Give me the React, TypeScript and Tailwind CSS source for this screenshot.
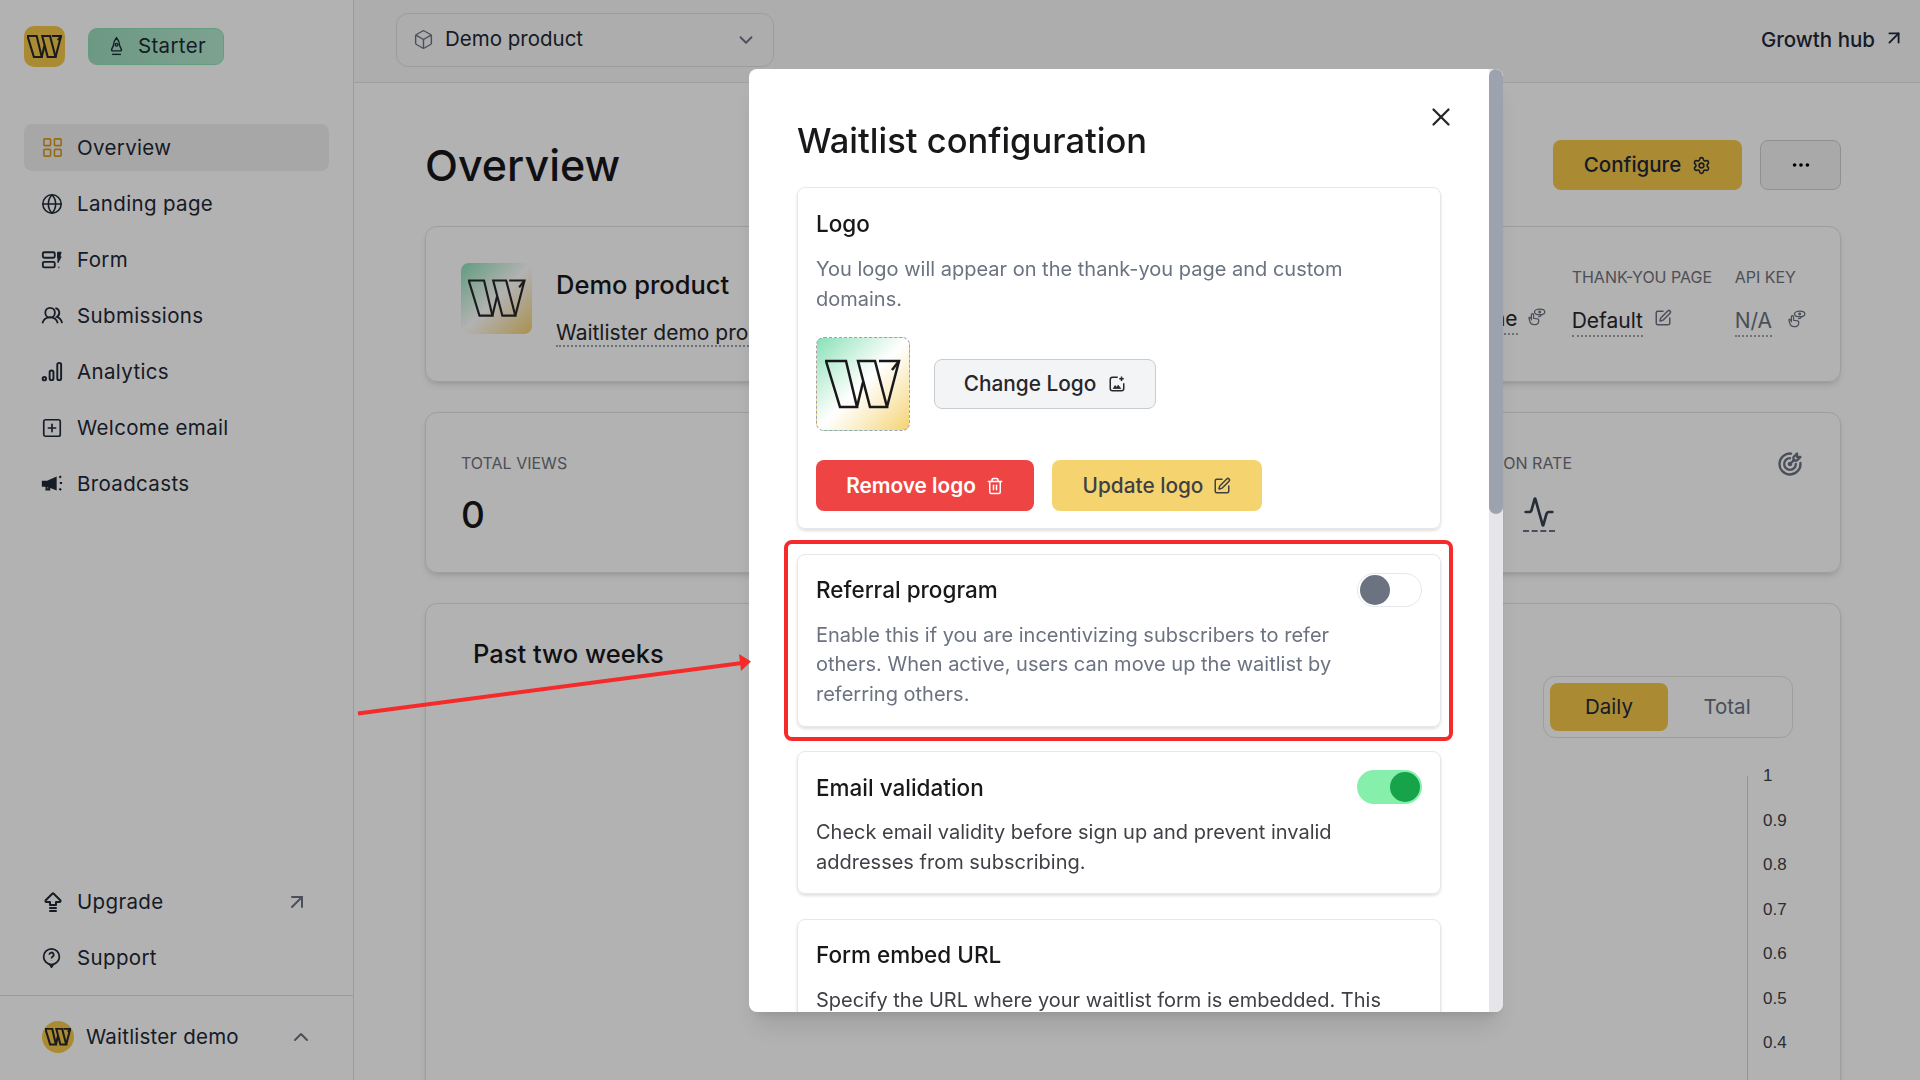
import { ReactNode } from "react";
import {
  Activity,
  ArrowUpRight,
  Box,
  ChevronDown,
  ChevronUp,
  Ellipsis,
  Globe,
  LayoutGrid,
  Settings,
  SquarePen,
  SquarePlus,
  Trash2,
  X,
} from "lucide-react";
import { TbArrowBigUpLines, TbTargetArrow } from "react-icons/tb";

const font = { fontFamily: "Inter, 'Noto Sans', sans-serif" };

const WMark = ({ className = "", sw = 2.500 }: { className?: string; sw?: number }) => (
  <svg viewBox="-1 -1 76 50" className={className} fill="none" stroke="currentColor" strokeWidth={sw} strokeLinejoin="miter">
    <path d="M0 1 H20 L31 47 H14 Z" />
    <path d="M32 1 H49 L61 47 H44 Z" />
    <path d="M31 47 L37 22" />
    <path d="M53 1 H73 L61 47" />
    <path d="M66 10 L73 1" />
  </svg>
);

const RocketUp = () => (
  <svg viewBox="0 0 24 24" className="w-[21px] h-[21px]" fill="none" stroke="currentColor" strokeWidth={1.600}>
    <path d="M12 2c2.600 3 3.600 6 3.600 9l2 4.500c.3 1-.4 1.500-1.200 1.500H7.600c-.8 0-1.500-.5-1.200-1.500l2-4.500c0-3 1-6 3.600-9Z" />
    <circle cx="12" cy="10" r="1.600" />
    <path d="M7 21h10" />
  </svg>
);

const FormIcon = () => (
  <svg viewBox="0 0 24 24" className="w-[22px] h-[22px]" fill="none" stroke="currentColor" strokeWidth={2}>
    <rect x="2" y="3.500" width="13" height="6" rx="1.500" />
    <rect x="2" y="14" width="13" height="6" rx="1.500" />
    <path d="M18 3.500h4l-1.500 5H22l-3.500 6.500V9.500H18Z" fill="currentColor" strokeWidth={1} />
    <path d="M19 20h1" />
  </svg>
);

const UsersIcon = () => (
  <svg viewBox="0 0 24 24" className="w-[23px] h-[23px]" fill="none" stroke="currentColor" strokeWidth={1.900}>
    <circle cx="9.500" cy="9" r="5" />
    <path d="M1.500 20c1-3.500 3.500-6 8-6s7 2.500 8 6" />
    <path d="M15 4.200a5 5 0 0 1 1.500 9.300c2.800.8 4.800 3 5.500 6.500" />
  </svg>
);

const BarsIcon = () => (
  <svg viewBox="0 0 24 24" className="w-[23px] h-[23px]" fill="none" stroke="currentColor" strokeWidth={2}>
    <circle cx="3.500" cy="19.500" r="1.800" />
    <rect x="9" y="11" width="4" height="10" rx="2" />
    <rect x="17" y="3" width="4" height="18" rx="2" />
  </svg>
);

const MegaIcon = () => (
  <svg viewBox="0 0 24 24" className="w-[22px] h-[22px]" fill="none" stroke="currentColor" strokeWidth={2.200}>
    <path d="M2 9.500h5l9-4v12l-9-3.500H2Z" fill="currentColor" />
    <path d="M6 14v4h3v-3" />
    <path d="M20 5l2-1.500M20.500 11H23M20 17l2 1.500" />
  </svg>
);

const SupportIcon = () => (
  <svg viewBox="0 0 24 24" className="w-[21px] h-[21px]" fill="none" stroke="currentColor" strokeWidth={2}>
    <circle cx="12" cy="11" r="9" />
    <path d="M9.500 8.800a2.500 2.500 0 1 1 3.700 2.200c-.8.500-1.200 1-1.200 2" />
    <path d="M12 15.800v.2" />
    <path d="M10 20l2 3 2-3" />
  </svg>
);

const HandEye = () => (
  <svg viewBox="0 0 24 24" className="w-[19px] h-[19px] mt-[3px] text-[#6b7280]" fill="none" stroke="currentColor" strokeWidth={1.600}>
    <path d="M9 21c-3 0-5-2-5.500-4.500L2.500 13c-.3-1 1.200-1.600 1.800-.6L5.500 14V8.500a1.400 1.400 0 0 1 2.800 0V13l5 .8c1 .2 1.700 1 1.600 2-.2 2.800-1.400 5.200-4.400 5.200Z" />
    <ellipse cx="16" cy="5" rx="6.500" ry="3.500" />
    <circle cx="16" cy="5" r="1" fill="currentColor" />
    <path d="M14 11c2 0 4-1 5-3" />
  </svg>
);

const ImageAdd = () => (
  <svg viewBox="0 0 24 24" className="w-[18px] h-[18px]" fill="none" stroke="currentColor" strokeWidth={2}>
    <path d="M13 3H6a3 3 0 0 0-3 3v12a3 3 0 0 0 3 3h12a3 3 0 0 0 3-3v-7" />
    <path d="M7 18l2.500-4 2 2.500 2-3 3.500 4.500Z" fill="currentColor" strokeWidth={1} />
    <path d="M18 2v6M15 5h6" />
  </svg>
);

const navItems: { label: string; icon: ReactNode; active?: boolean }[] = [
  { label: "Overview", icon: <LayoutGrid size={23} strokeWidth={1.700} className="text-[#d99a1c]" />, active: true },
  { label: "Landing page", icon: <Globe size={22} strokeWidth={1.700} /> },
  { label: "Form", icon: <FormIcon /> },
  { label: "Submissions", icon: <UsersIcon /> },
  { label: "Analytics", icon: <BarsIcon /> },
  { label: "Welcome email", icon: <SquarePlus size={22} strokeWidth={1.800} /> },
  { label: "Broadcasts", icon: <MegaIcon /> },
];

const NavRow = ({ label, icon, active, trailing }: { label: string; icon: ReactNode; active?: boolean; trailing?: ReactNode }) => (
  <div className={`flex items-center h-[47px] pl-[17px] pr-[20px] rounded-lg text-[#1f2937] ${active ? "bg-[#f0f0f0]" : ""}`}>
    <span className="w-[36px] flex shrink-0">{icon}</span>
    <span className="text-[20.500px] tracking-[0.35px] pt-[1px]">{label}</span>
    {trailing && <span className="ml-auto">{trailing}</span>}
  </div>
);

const Sidebar = () => (
  <aside className="w-[354px] h-[1080px] shrink-0 border-r border-[#e0e0e0] bg-white flex flex-col">
    <div className="flex items-center pl-[24px] pt-[26px] gap-[23px]">
      <div className="w-[41px] h-[41px] rounded-[10px] bg-[#f4c84a] text-[#27272a] flex items-center justify-center">
        <WMark className="w-[35px]" sw={4.500} />
      </div>
      <div className="w-[136px] h-[37px] rounded-[9px] border border-[#8fe0b8] bg-gradient-to-r from-[#9bdcbc] to-[#b4e8cf] flex items-center justify-center gap-[11px] text-[#1f2937]">
        <RocketUp />
        <span className="text-[20.500px] tracking-[0.35px]">Starter</span>
      </div>
    </div>
    <nav className="mt-[57px] mx-[24px] flex flex-col gap-[9px]">
      {navItems.map((item) => (
        <NavRow key={item.label} {...item} />
      ))}
    </nav>
    <div className="mt-auto mx-[24px] flex flex-col gap-[9px] mb-[14px]">
      <NavRow
        label="Upgrade"
        icon={<TbArrowBigUpLines size={24} />}
        trailing={<ArrowUpRight size={24} className="text-[#6b7280]" />}
      />
      <NavRow label="Support" icon={<SupportIcon />} />
    </div>
    <div className="h-[85px] pb-[2px] border-t border-[#e0e0e0] flex items-center pl-[42px] pr-[40px] text-[#1f2937]">
      <div className="w-[32px] h-[32px] rounded-full bg-[#f4c84a] flex items-center justify-center text-[#27272a]">
        <WMark className="w-[26px]" sw={6} />
      </div>
      <span className="ml-[12px] text-[20.500px] tracking-[0.2px]">Waitlister demo</span>
      <ChevronUp size={24} className="ml-auto text-[#6b7280]" />
    </div>
  </aside>
);

const Label = ({ children }: { children: ReactNode }) => (
  <div className="text-[16px] text-[#71717a] uppercase whitespace-nowrap">{children}</div>
);

const Dotted = ({ children, muted }: { children: ReactNode; muted?: boolean }) => (
  <span className={`border-b-2 border-dotted border-[#9ca3af] text-[21px] leading-[28px] whitespace-nowrap ${muted ? "text-[#6b7280]" : "text-[#27272a]"}`}>{children}</span>
);

const axis = ["1", "0.9", "0.8", "0.7", "0.6", "0.5", "0.4", "0.3"];

const Main = () => (
  <div className="flex-1 h-[1080px] overflow-hidden bg-white">
    <header className="h-[83px] border-b border-[#e4e4e4] bg-[#f8f8f8] flex items-center pl-[42px] pr-[15px]">
      <div className="w-[378px] h-[54px] mb-[3px] rounded-xl border border-[#e0e0e0] flex items-center pl-[16px] pr-[16px] text-[#1f2937]">
        <Box size={21} strokeWidth={1.600} className="text-[#6b7280]" />
        <span className="ml-[11px] text-[20.500px]">Demo product</span>
        <ChevronDown size={22} className="ml-auto text-[#6b7280]" />
      </div>
      <div className="ml-auto mb-[2px] flex items-center gap-[8px] text-[#1f2937]">
        <span className="text-[20.500px] font-medium">Growth hub</span>
        <ArrowUpRight size={22} className="-translate-y-[2px]" />
      </div>
    </header>
    <div className="pl-[71px] pr-[79px]">
      <div className="h-[143px] pt-[21px] flex items-center justify-between">
        <h1 className="text-[43px] font-medium text-[#18181b]">Overview</h1>
        <div className="flex gap-[18px]">
          <div className="w-[189px] h-[50px] rounded-lg bg-[#f4c84a] flex items-center justify-center gap-[11px] text-[#1f2937]">
            <span className="text-[20.500px] font-medium">Configure</span>
            <Settings size={19} />
          </div>
          <div className="w-[81px] h-[50px] rounded-lg border border-[#cfcfcf] bg-[#f3f3f3] flex items-center justify-center">
            <Ellipsis size={22} />
          </div>
        </div>
      </div>

      <section className="h-[156px] rounded-xl border border-[#e2e2e2] shadow-md flex pl-[35px] relative">
        <div className="w-[71px] h-[71px] mt-[36px] rounded-lg bg-gradient-to-br from-[#86e0b8] via-white to-[#f5cf6b] text-[#27272a] flex items-center justify-center">
          <WMark className="w-[58px]" sw={2.800} />
        </div>
        <div className="ml-[24px] pt-[39px]">
          <div className="text-[25.500px] font-medium text-[#18181b]">Demo product</div>
          <div className="mt-[15px]">
            <Dotted>Waitlister demo product</Dotted>
          </div>
        </div>
        <div className="ml-auto flex pt-[38px] pr-[34px]">
          <div className="mt-[40px] flex items-start gap-[9px] mr-[26px]">
            <Dotted>None</Dotted>
            <HandEye />
          </div>
          <div className="w-[163px]">
            <Label>Thank-you page</Label>
            <div className="mt-[18px] flex items-start gap-[11px]">
              <Dotted>Default</Dotted>
              <SquarePen size={18} className="mt-[2px] text-[#6b7280]" />
            </div>
          </div>
          <div>
            <Label>API key</Label>
            <div className="mt-[18px] flex items-start gap-[15px]">
              <Dotted muted>N/A</Dotted>
              <HandEye />
            </div>
          </div>
        </div>
      </section>

      <section className="mt-[30px] h-[161px] rounded-xl border border-[#e2e2e2] shadow-md flex justify-between pl-[35px] pr-[36px] pt-[38px]">
        <div>
          <Label>Total views</Label>
          <div className="mt-[18px] text-[37px] font-medium text-[#18181b] leading-[44px]">0</div>
        </div>
        <div className="flex gap-[204px]">
          <div>
            <Label>Conversion rate</Label>
            <div className="mt-[19px] flex items-center gap-[41px]">
              <span className="text-[37px] font-medium text-[#18181b] leading-[40px]">0%</span>
              <span className="border-b-2 border-dashed border-[#6b7280] pb-[2px]">
                <Activity size={32} className="text-[#374151]" />
              </span>
            </div>
          </div>
          <TbTargetArrow size={28} className="-mt-[1px] text-[#6b7280]" />
        </div>
      </section>

      <section className="mt-[30px] h-[600px] rounded-xl border border-[#e2e2e2] shadow-md flex justify-between pl-[47px] pr-[47px] pt-[31px]">
        <h2 className="text-[25.500px] font-medium text-[#18181b] h-fit">Past two weeks</h2>
        <div className="flex flex-col items-end">
          <div className="mt-[41px] w-[250px] h-[62px] p-[6px] rounded-xl border border-[#e2e2e2] flex">
            <div className="w-[118px] rounded-lg bg-[#f4c84a] text-[#1f2937] text-[20.500px] flex items-center justify-center">Daily</div>
            <div className="flex-1 text-[#6b7280] text-[20.500px] flex items-center justify-center">Total</div>
          </div>
          <div className="mt-[38px] w-[46px] border-l border-[#d1d5db] h-[400px] flex flex-col gap-[22.500px] pl-[15px]">
            {axis.map((v) => (
              <span key={v} className="text-[17px] leading-[22px] text-[#3f3f46] -translate-y-[11px]" style={{ fontFamily: "'Liberation Sans', sans-serif" }}>
                {v}
              </span>
            ))}
          </div>
        </div>
      </section>
    </div>
  </div>
);

const ConfigCard = ({ title, toggle, dark, children, className = "" }: { title: string; toggle?: "on" | "off"; dark?: boolean; children: ReactNode; className?: string }) => (
  <div className={`rounded-lg border border-[#e5e7eb] shadow-[0_2px_3px_rgba(0,0,0,0.12)] pl-[18px] pr-[18px] pt-[18px] ${className}`}>
    <div className="flex items-center justify-between h-[34px]">
      <h3 className="text-[22.500px] font-medium text-[#18181b] pt-[1px]">{title}</h3>
      {toggle === "off" && (
        <div className="w-[65px] h-[34px] rounded-full border border-[#e5e7eb] flex items-center pl-[2px]">
          <div className="w-[30px] h-[30px] rounded-full bg-[#6b7280]" />
        </div>
      )}
      {toggle === "on" && (
        <div className="w-[65px] h-[34px] rounded-full bg-[#86efac] flex items-center justify-end pr-[2px]">
          <div className="w-[30px] h-[30px] rounded-full bg-[#16a34a]" />
        </div>
      )}
    </div>
    <p className={`mt-[14px] w-[570px] text-[20px] leading-[29.500px] ${dark ? "text-[#3f3f46]" : "text-[#6b7280]"}`}>{children}</p>
  </div>
);

const Modal = () => (
  <div className="fixed left-[749px] top-[69px] w-[754px] h-[943px] rounded-lg overflow-hidden bg-white shadow-xl" style={font}>
    <div className="absolute right-0 top-0 bottom-0 w-[14px] bg-[#e5e5ea]">
      <div className="h-[445px] rounded-full bg-[#9ca3af]" />
    </div>
    <X size={30} strokeWidth={1.800} className="absolute left-[677px] top-[33px] text-[#27272a]" />
    <div className="pl-[48px] pr-[62px] pt-[50px]">
      <h2 className="text-[34.500px] font-medium text-[#18181b] leading-[44px]">Waitlist configuration</h2>
      <div className="mt-[24px] flex flex-col gap-[24.500px]">
        <div className="h-[342px] rounded-lg border border-[#e5e7eb] shadow-[0_2px_3px_rgba(0,0,0,0.12)] px-[18px] pt-[20px]">
          <h3 className="text-[22.500px] font-medium text-[#18181b] leading-[32px]">Logo</h3>
          <p className="mt-[15px] text-[20px] leading-[29.500px] text-[#6b7280] w-[570px]">You logo will appear on the thank-you page and custom domains.</p>
          <div className="mt-[23px] flex items-center gap-[24px]">
            <div className="w-[94px] h-[94px] rounded-lg border border-dashed border-[#a1a1aa] bg-gradient-to-br from-[#86e0b8] via-white to-[#f5d36f] text-[#18181b] flex items-center justify-center">
              <WMark className="w-[76px]" sw={2.500} />
            </div>
            <div className="w-[222px] h-[50px] rounded-lg border border-[#c9cbd0] bg-[#f3f4f6] flex items-center justify-center gap-[12px] text-[#27272a]">
              <span className="text-[20.800px] font-medium">Change Logo</span>
              <ImageAdd />
            </div>
          </div>
          <div className="mt-[29px] flex gap-[18px]">
            <div className="w-[218px] h-[51px] rounded-lg bg-[#ef4444] text-white flex items-center justify-center gap-[10px]">
              <span className="text-[20.800px] font-semibold">Remove logo</span>
              <Trash2 size={18} />
            </div>
            <div className="w-[210px] h-[51px] rounded-lg bg-[#f5d470] text-[#3f3f46] flex items-center justify-center gap-[10px]">
              <span className="text-[20.800px] font-medium">Update logo</span>
              <SquarePen size={18} />
            </div>
          </div>
        </div>
        <ConfigCard title="Referral program" toggle="off" className="h-[173px]">
          Enable this if you are incentivizing subscribers to refer others. When active, users can move up the waitlist by referring others.
        </ConfigCard>
        <ConfigCard title="Email validation" toggle="on" dark className="h-[143px]">
          Check email validity before sign up and prevent invalid addresses from subscribing.
        </ConfigCard>
        <ConfigCard title="Form embed URL" dark className="h-[200px]">
          Specify the URL where your waitlist form is embedded. This
        </ConfigCard>
      </div>
    </div>
  </div>
);

export default function App() {
  return (
    <div className="relative w-[1920px] h-[1080px] overflow-hidden flex bg-white" style={font}>
      <Sidebar />
      <Main />
      <div className="fixed inset-0 bg-black/30" />
      <Modal />
      {/* annotation: red frame and arrow drawn over the screenshot */}
      <div className="fixed left-[784px] top-[540px] w-[669px] h-[201px] rounded-lg border-[4px] border-[#f52a2a]" />
      <svg className="fixed left-0 top-0 w-[1920px] h-[1080px] pointer-events-none" viewBox="0 0 1920 1080">
        <path d="M358 713.500 L742 663" stroke="#f52a2a" strokeWidth={4} />
        <path d="M739 654 L751 661.500 L741 671 Z" fill="#f52a2a" />
      </svg>
    </div>
  );
}
